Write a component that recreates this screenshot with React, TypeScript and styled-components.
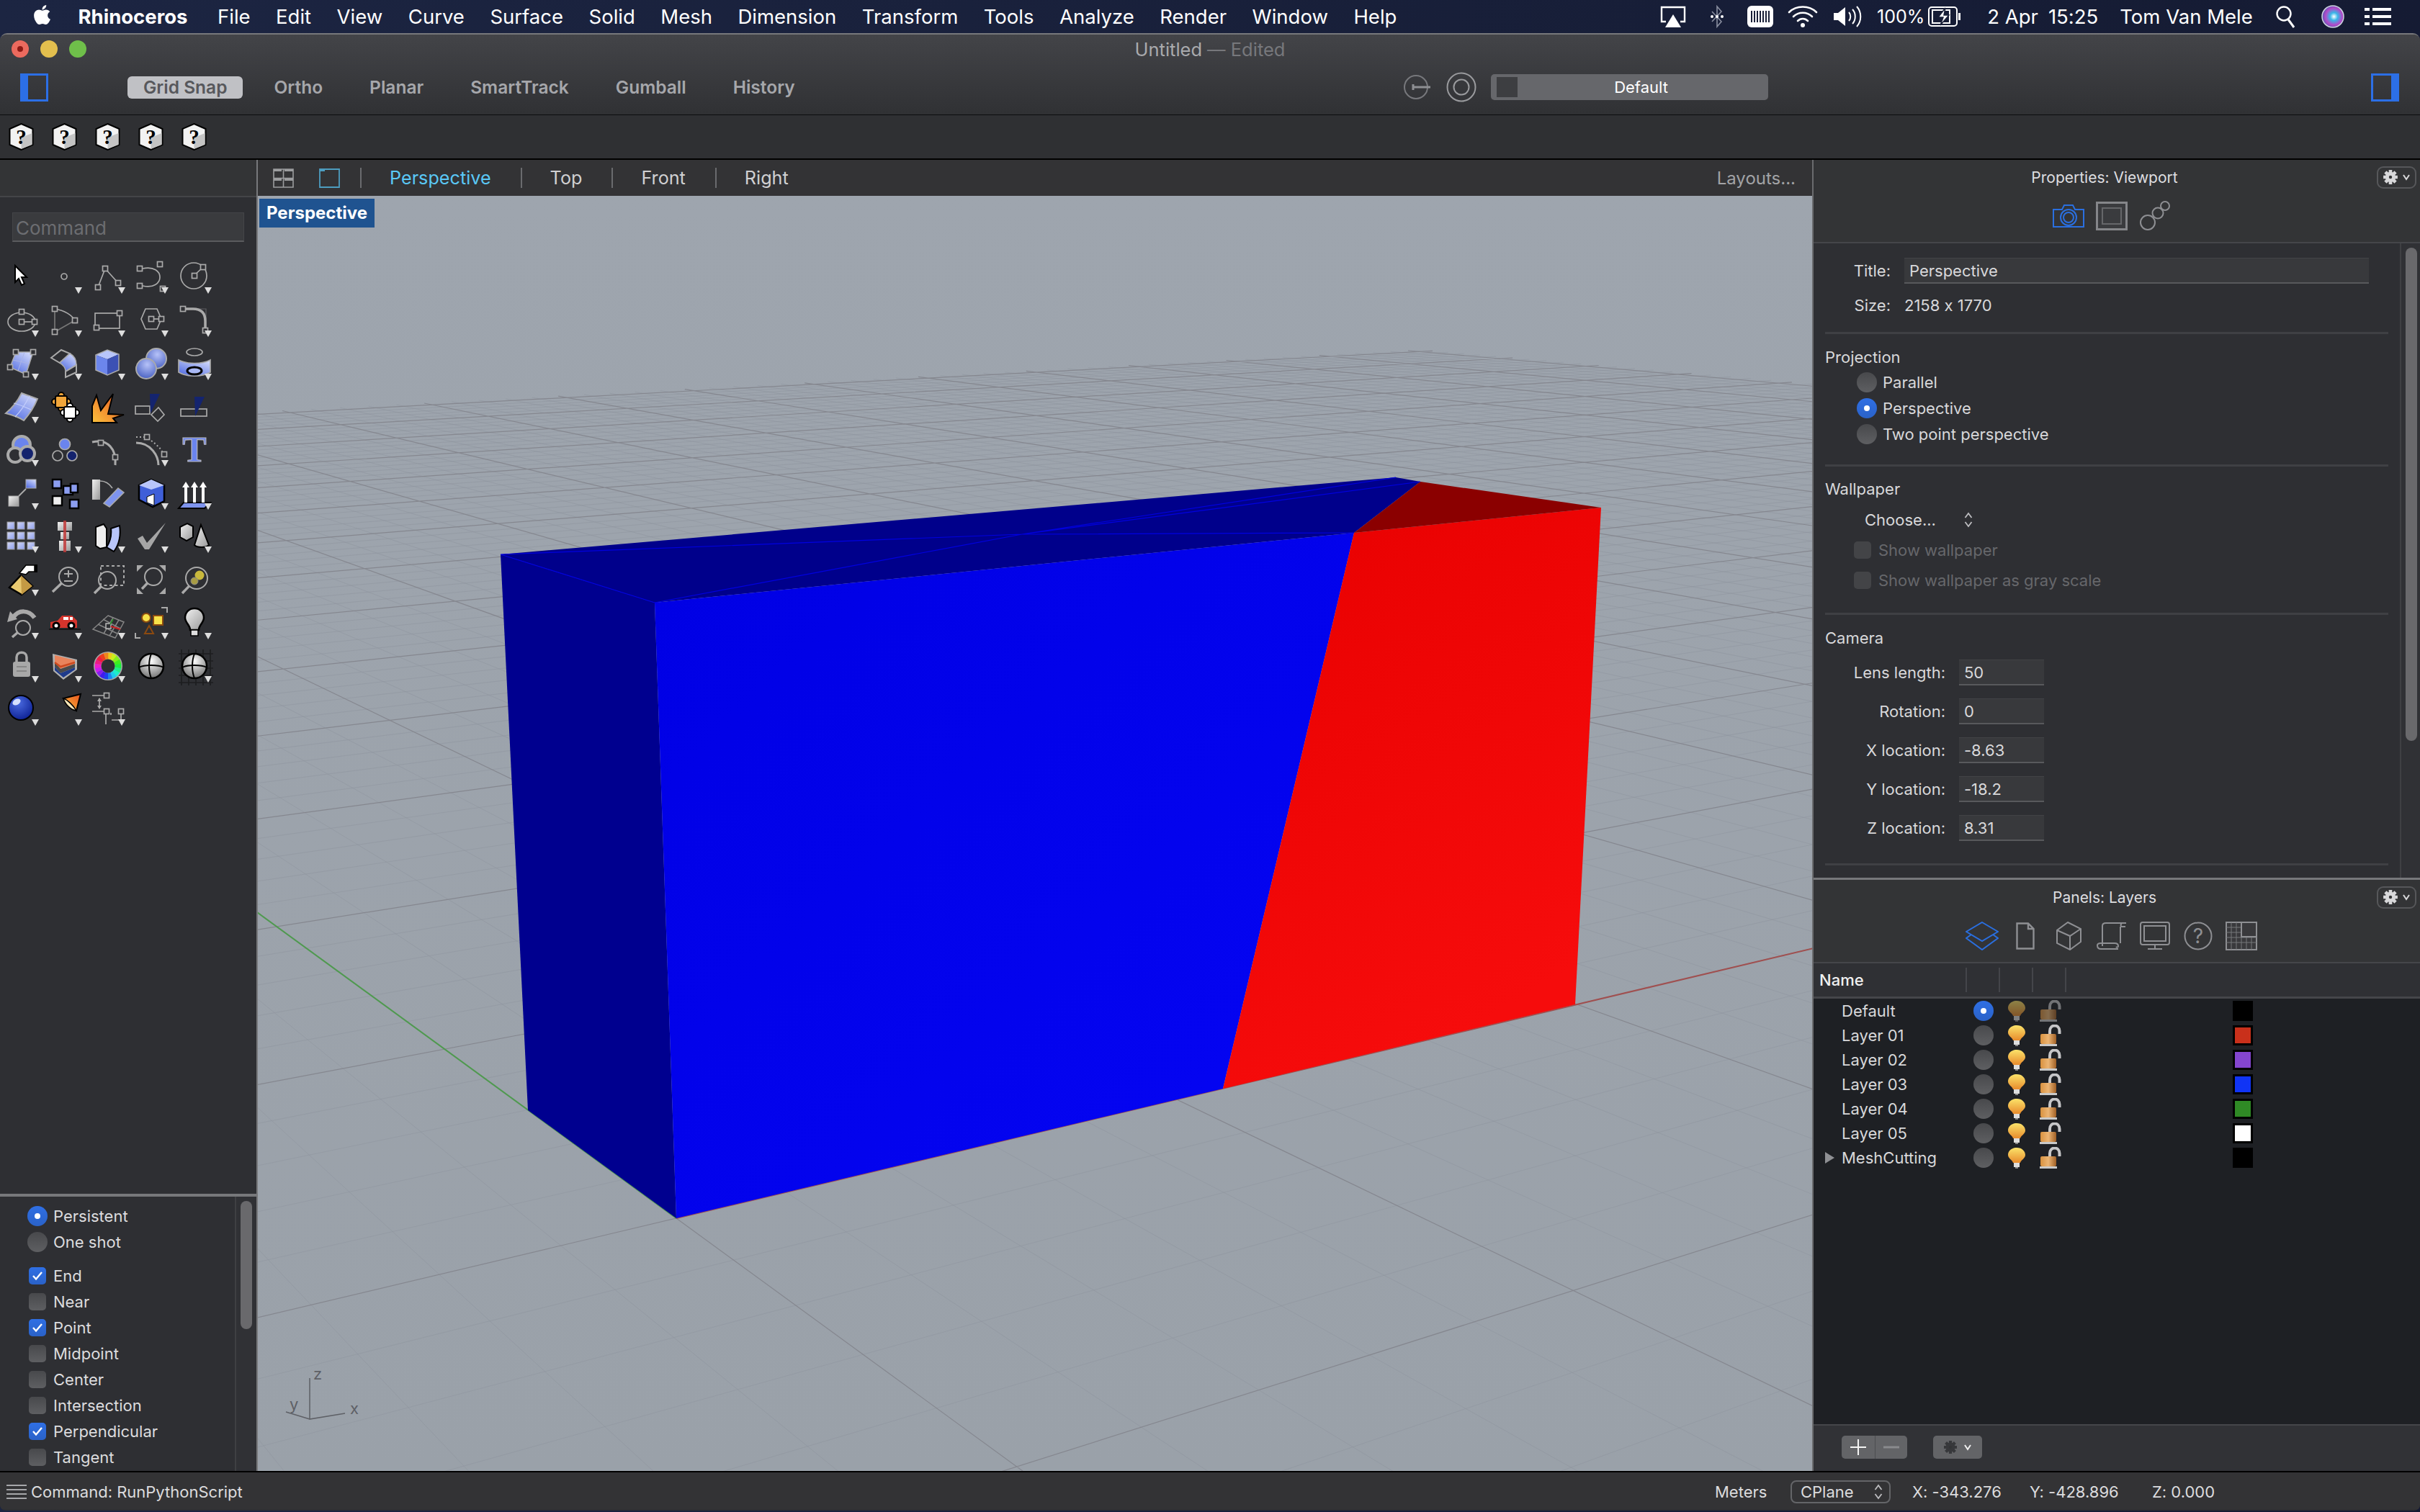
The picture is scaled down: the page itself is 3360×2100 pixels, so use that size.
import React from 'react';
import styled, { createGlobalStyle } from 'styled-components';
import { FaApple } from 'react-icons/fa';

const GlobalStyle = createGlobalStyle`
  html, body {
    margin: 0;
    padding: 0;
    width: 3360px;
    height: 2100px;
    overflow: hidden;
    background: #171d35;
    font-family: Inter, "Liberation Sans", sans-serif;
    font-feature-settings: "calt" 0;
  }
  * { box-sizing: border-box; }
`;

const Page = styled.div`
  width: 3360px;
  height: 2100px;
  display: flex;
  flex-direction: column;
  background: linear-gradient(90deg, #1c2542, #151b33);
`;

const MenuBar = styled.div`
  height: 46px;
  flex: none;
  display: flex;
  align-items: center;
  color: #fff;
  font-size: 27.5px;
  line-height: 46px;
`;

const MenuLeft = styled.div`
  width: 2305px;
  flex: none;
  display: flex;
  align-items: center;
  gap: 35.5px;
  padding-left: 43px;
  svg { margin-right: -1px; margin-top: -6px; }
`;

const MenuItem = styled.span<{ $bold?: boolean }>`
  font-weight: ${(p) => (p.$bold ? 700 : 400)};
  margin-right: ${(p) => (p.$bold ? 6 : 0)}px;
`;

const StatusIcon = styled.span<{ $gap?: number; $small?: boolean }>`
  display: flex;
  align-items: center;
  margin-left: ${(p) => p.$gap ?? 0}px;
  white-space: nowrap;
  ${(p) => (p.$small ? 'font-size: 25px;' : '')}
`;

const Win = styled.div`
  flex: 1;
  display: flex;
  flex-direction: column;
  border-top: 2px solid #77787b;
  border-radius: 10px 10px 8px 8px;
  margin-bottom: 2px;
  background: #2f3033;
  overflow: hidden;
`;

const TitleArea = styled.div`
  height: 112px;
  flex: none;
  border-bottom: 1px solid #0c0c0e;
  background: linear-gradient(180deg, #434448, #303134);
`;

const TitleRow = styled.div`
  height: 40px;
  display: flex;
  align-items: center;
  justify-content: center;
  position: relative;
  font-size: 25.5px;
  color: #a9aaad;
`;

const Dimmed = styled.span`
  color: #77787c;
  margin-left: 7px;
`;

const Lights = styled.div`
  position: absolute;
  left: 16px;
  top: 8px;
  display: flex;
  gap: 16px;
`;

const Light = styled.span<{ $color: string; $dot?: boolean }>`
  width: 24px;
  height: 24px;
  border-radius: 50%;
  background: ${(p) => p.$color};
  display: flex;
  align-items: center;
  justify-content: center;
  &::after {
    content: '';
    width: 8px;
    height: 8px;
    border-radius: 50%;
    background: ${(p) => (p.$dot ? '#8e1a14' : 'transparent')};
  }
`;

const ToolRow = styled.div`
  height: 66px;
  display: grid;
  grid-template-columns: 1920px 1fr auto;
  align-items: center;
  padding: 0 29px 0 28px;
`;

const ToolGroup = styled.div`
  display: flex;
  align-items: center;
  gap: 21px;
`;

const SideIcon = styled.span<{ $side: 'left' | 'right' }>`
  width: 39px;
  height: 39px;
  display: block;
  border: 3px solid #2c6fe6;
  border-${(p) => p.$side}-width: 11px;
  margin-right: 89px;
  ${(p) => (p.$side === 'right' ? 'margin-right: 0;' : '')}
`;

const ToggleBtn = styled.span<{ $on?: boolean }>`
  height: 31px;
  padding: 0 22px;
  border-radius: 6px;
  display: flex;
  align-items: center;
  font-size: 24.5px;
  font-weight: 600;
  color: ${(p) => (p.$on ? '#57585c' : '#a6a7ab')};
  background: ${(p) => (p.$on ? '#c0c1c5' : 'transparent')};
`;

const GizmoGroup = styled.div`
  display: flex;
  align-items: center;
  gap: 22px;
  svg:nth-child(2) { margin-left: -2px; margin-right: -2px; }
`;

const LayerCombo = styled.div`
  width: 385px;
  height: 36px;
  border-radius: 5px;
  background: #66676b;
  color: #fff;
  font-size: 22px;
  display: flex;
  align-items: center;
  position: relative;
  justify-content: center;
  padding-left: 32px;
  &::before {
    content: '';
    position: absolute;
    left: 8px;
    top: 4px;
    width: 29px;
    height: 28px;
    background: #3d3e41;
  }
`;

const IconBar = styled.div`
  height: 62px;
  flex: none;
  border-bottom: 2px solid #000;
  background: #2f3033;
  display: flex;
  align-items: center;
  gap: 25px;
  padding: 0 0 0 12px;
`;

const Workspace = styled.div`
  height: 1821px;
  flex: none;
  display: flex;
`;

const LeftCol = styled.div`
  width: 358px;
  flex: none;
  display: flex;
  flex-direction: column;
  border-right: 2px solid #77787b;
  background: #2e2f33;
`;

const LeftStrip = styled.div`
  height: 52px;
  flex: none;
  background: #333436;
  border-bottom: 2px solid #444548;
`;

const ToolPanel = styled.div`
  flex: 1;
  padding-top: 21px;
  border-bottom: 4px solid #77787b;
  min-height: 0;
`;

const CommandBox = styled.div`
  width: 322px;
  height: 41px;
  margin: 0 0 18px 17px;
  background: #3a3b3e;
  border: 1px solid #444548;
  border-bottom: 2px solid #5a5b5e;
  padding-left: 4px;
  font-size: 26px;
  line-height: 42px;
  color: #6c6d71;
`;

const ToolGrid = styled.div`
  display: grid;
  grid-template-columns: repeat(5, 60px);
  grid-auto-rows: 60px;
`;

const ToolSvg = styled.svg`
  width: 60px;
  height: 60px;
  display: block;
`;

const SnapPanel = styled.div`
  height: 381px;
  flex: none;
  display: flex;
  padding-top: 0;
`;

const SnapList = styled.div`
  flex: 1;
  padding: 9px 0 0 38px;
  font-size: 22px;
  color: #dcdcde;
`;

const Spaced = styled.div`
  height: 11px;
`;

const OptionRow = styled.div<{ $indent?: number; $muted?: boolean; $h?: number; $top?: number }>`
  height: ${(p) => p.$h ?? 36}px;
  margin-top: ${(p) => p.$top ?? 0}px;
  display: flex;
  align-items: center;
  padding-left: ${(p) => p.$indent ?? 0}px;
  color: ${(p) => (p.$muted ? '#66676b' : 'inherit')};
`;

const Radio = styled.span<{ $on?: boolean }>`
  width: 28px;
  height: 28px;
  flex: none;
  border-radius: 50%;
  margin-right: 8px;
  display: inline-flex;
  align-items: center;
  justify-content: center;
  background: ${(p) =>
    p.$on
      ? 'linear-gradient(180deg, #2f6fe4, #2a62c8)'
      : 'linear-gradient(180deg, #48494c, #5e5f62)'};
  &::after {
    content: '';
    width: 8px;
    height: 8px;
    border-radius: 50%;
    background: ${(p) => (p.$on ? '#fff' : 'transparent')};
  }
`;

const Check = styled.span<{ $on?: boolean; $muted?: boolean }>`
  width: 24px;
  height: 24px;
  flex: none;
  border-radius: 5px;
  margin: 0 10px 0 ${(p) => (p.$muted ? 0 : 2)}px;
  display: inline-flex;
  align-items: center;
  justify-content: center;
  background: ${(p) =>
    p.$on
      ? 'linear-gradient(180deg, #2f6fe4, #2a62c8)'
      : p.$muted
        ? '#434447'
        : 'linear-gradient(180deg, #48494c, #5e5f62)'};
`;

const ScrollTrack = styled.div`
  width: 30px;
  flex: none;
  border-left: 2px solid #3f4043;
  background: #303135;
  padding: 6px 0 0 6px;
`;

const ScrollThumb = styled.div<{ $h: number }>`
  width: 16px;
  height: ${(p) => p.$h}px;
  border-radius: 8px;
  background: #69696c;
`;

const Center = styled.div`
  flex: 1;
  display: flex;
  flex-direction: column;
  border-right: 2px solid #6a6b6e;
`;

const Tabs = styled.div`
  height: 50px;
  flex: none;
  background: #333335;
  display: flex;
  align-items: center;
  padding-left: 21px;
`;

const TabIcon = styled.svg`
  width: 29px;
  height: 27px;
  margin-right: 35px;
  &:nth-of-type(2) { margin-right: 28px; }
`;

const Tab = styled.span<{ $on?: boolean }>`
  height: 28px;
  line-height: 28px;
  padding: 0 41px 0 39px;
  border-left: 2px solid #6a6b6e;
  font-size: 25.2px;
  color: ${(p) => (p.$on ? '#5ac8f6' : '#d0d0d2')};
`;

const LayoutsBtn = styled.span`
  margin-left: auto;
  padding-right: 23px;
  font-size: 24px;
  color: #a2a3a6;
`;

const Viewport = styled.div`
  flex: 1;
  position: relative;
  background: linear-gradient(180deg, #9ea5ae, #9aa1a9);
  overflow: hidden;
  svg { display: block; }
`;

const ViewLabel = styled.div`
  position: absolute;
  left: 2px;
  top: 4px;
  width: 160px;
  height: 40px;
  background: #1f5390;
  color: #fff;
  font-size: 24px;
  font-weight: 700;
  line-height: 40px;
  text-align: center;
`;

const RightCol = styled.div`
  width: 844px;
  flex: none;
  display: flex;
  flex-direction: column;
  color: #d8d8da;
  font-size: 22px;
`;

const PropsPanel = styled.div`
  height: 1000px;
  flex: none;
  display: flex;
  flex-direction: column;
  border-bottom: 3px solid #77787b;
  background: #2e2f33;
`;

const PanelHead = styled.div`
  height: 116px;
  flex: none;
  background: #333436;
  border-bottom: 2px solid #45464a;
`;

const PanelTitleRow = styled.div`
  height: 48px;
  display: flex;
  align-items: center;
`;

const PanelTitle = styled.div`
  width: 808px;
  text-align: center;
  font-size: 21px;
  color: #dedee0;
`;

const GearBtn = styled.div`
  width: 55px;
  height: 31px;
  margin-left: -26px;
  border: 2px solid #56575a;
  border-radius: 9px;
  display: flex;
  align-items: center;
  justify-content: center;
  gap: 5px;
  color: #d8d8da;
`;

const PanelIcons = styled.div<{ $left: number }>`
  height: 60px;
  display: grid;
  grid-auto-flow: column;
  grid-auto-columns: 60px;
  justify-content: start;
  justify-items: center;
  align-items: center;
  padding-left: ${(p) => p.$left}px;
`;

const PropsBody = styled.div`
  flex: 1;
  display: flex;
  min-height: 0;
`;

const PropsScroll = styled.div`
  flex: 1;
  padding: 0 16px;
`;

const Section = styled.div<{ $h: number }>`
  height: ${(p) => p.$h}px;
  border-bottom: 3px solid #3f4044;
  display: flex;
  flex-direction: column;
`;

const SectionTitle = styled.div<{ $top: number; $after: number }>`
  height: 26px;
  line-height: 26px;
  margin-top: ${(p) => p.$top}px;
  margin-bottom: ${(p) => p.$after}px;
`;

const LabelRow = styled.div<{ $label: number; $h: number; $top?: number }>`
  display: grid;
  grid-template-columns: ${(p) => p.$label}px 1fr;
  column-gap: 19px;
  align-items: center;
  height: ${(p) => p.$h}px;
  margin-top: ${(p) => p.$top ?? 0}px;
`;

const RowLabel = styled.span`
  text-align: right;
`;

const Field = styled.div<{ $w: number }>`
  width: ${(p) => p.$w}px;
  height: 36px;
  line-height: 34px;
  padding-left: 7px;
  background: #38393c;
  border-top: 1px solid #424346;
  border-bottom: 2px solid #58595c;
`;

const ChooseRow = styled.div`
  height: 44px;
  display: flex;
  align-items: center;
  padding-left: 55px;
  gap: 38px;
`;

const LayersPanel = styled.div`
  flex: 1;
  display: flex;
  flex-direction: column;
  min-height: 0;
`;

const ColHead = styled.div`
  height: 49px;
  flex: none;
  display: flex;
  align-items: center;
  padding-left: 8px;
  background: #2f3034;
  border-bottom: 3px solid #45464a;
  font-size: 22px;
  font-weight: 500;
  color: #f0f0f0;
`;

const ColMarks = styled.div`
  display: flex;
  margin-left: 141px;
  span {
    width: 46px;
    height: 34px;
    border-left: 2px solid #44454a;
  }
`;

const LayerList = styled.div`
  flex: 1;
  background: #1e2024;
`;

const LayerRow = styled.div`
  height: 34px;
  display: grid;
  grid-template-columns: 39px 183px 46px 46px 46px 222px 28px;
  align-items: center;
  font-size: 22px;
  color: #d8d8da;
  svg { display: block; }
`;

const Arrow = styled.span`
  width: 0;
  height: 0;
  margin-left: 16px;
  border-left: 13px solid #8f9094;
  border-top: 8px solid transparent;
  border-bottom: 8px solid transparent;
`;

const Swatch = styled.span<{ $color: string }>`
  width: 28px;
  height: 28px;
  border: 3px solid #000;
  background: ${(p) => p.$color};
`;

const LayersFoot = styled.div`
  height: 65px;
  flex: none;
  background: #313236;
  border-top: 2px solid #45464a;
  padding: 14px 0 0 39px;
  display: flex;
  gap: 36px;
`;

const FootGroup = styled.div`
  height: 32px;
  width: 91px;
  border-radius: 5px;
  background: #636467;
  display: flex;
  align-items: center;
  color: #f0f0f0;
`;

const FootCell = styled.span<{ $w: number; $split?: boolean }>`
  width: ${(p) => p.$w}px;
  height: 32px;
  display: flex;
  align-items: center;
  justify-content: center;
  gap: 6px;
  ${(p) => (p.$split ? 'border-right: 1px solid #4c4d50;' : '')}
`;

const FootGear = styled(FootGroup)`
  width: 68px;
  justify-content: center;
  gap: 8px;
`;

const StatusBar = styled.div`
  height: 53px;
  flex: none;
  border-top: 2px solid #000;
  background: #333335;
  display: flex;
  align-items: center;
  padding-top: 2px;
  font-size: 22px;
  color: #dcdcde;
`;

const LinesIcon = styled.span`
  width: 28px;
  height: 20px;
  margin: 0 6px 0 9px;
  background: repeating-linear-gradient(180deg, #a6a7aa 0 2px, transparent 2px 6px);
`;

const StatusRight = styled.div`
  margin-left: auto;
  display: flex;
  align-items: center;
  width: 979px;
`;

const StatusText = styled.span<{ $w: number }>`
  width: ${(p) => p.$w}px;
  flex: none;
  white-space: nowrap;
`;

const PlaneSelect = styled.div`
  width: 139px;
  height: 32px;
  flex: none;
  margin-right: 30px;
  border: 2px solid #646568;
  border-radius: 8px;
  display: flex;
  align-items: center;
  justify-content: space-between;
  padding: 0 8px 0 12px;
`;

const DefsSvg = styled.svg`
  display: block;
  width: 0;
  height: 0;
`;

// ---- viewport drawing ----

const proj = (u: number, v: number) => {
  const a = 0.125;
  const b = 0.19;
  const w = 1 + a * u + b * v;
  return [(939 + a * u * 7192 + b * v * -1076) / w, (1692 + a * u * 207 + b * v * 221) / w];
};

const EXT = 14.15;

const gridPath = (step: number, skipMajor: boolean) => {
  let d = '';
  const n = Math.floor(EXT / step);
  for (let i = -n; i <= n; i++) {
    const k = i * step;
    if (skipMajor && i % 5 === 0) continue;
    const vMin = Math.max(-EXT, (0.04 - 1 - 0.125 * k) / 0.19);
    if (vMin < EXT) {
      const p = proj(k, vMin);
      const q = proj(k, EXT);
      d += `M${p[0].toFixed(1)} ${p[1].toFixed(1)}L${q[0].toFixed(1)} ${q[1].toFixed(1)}`;
    }
    const uMin = Math.max(-EXT, (0.04 - 1 - 0.19 * k) / 0.125);
    if (uMin < EXT) {
      const p = proj(uMin, k);
      const q = proj(EXT, k);
      d += `M${p[0].toFixed(1)} ${p[1].toFixed(1)}L${q[0].toFixed(1)} ${q[1].toFixed(1)}`;
    }
  }
  return d;
};

const minorGrid = gridPath(0.2, true);
const majorGrid = gridPath(1, false);
const xAxisEnd = proj(EXT, 0);
const yAxisEnd = proj(0, EXT);

const Scene = () => (
  <svg width="2158" height="1771" viewBox="358 272 2158 1771">
    <defs>
      <linearGradient id="frontBlue" x1="0" y1="0" x2="1" y2="1">
        <stop offset="0" stopColor="#0000e4" />
        <stop offset="1" stopColor="#0505f4" />
      </linearGradient>
      <linearGradient id="frontRed" x1="0" y1="0" x2="0.4" y2="1">
        <stop offset="0" stopColor="#e80000" />
        <stop offset="1" stopColor="#f60c0c" />
      </linearGradient>
    </defs>
    <path d={minorGrid} stroke="#8e949d" strokeOpacity="0.5" strokeWidth="1" fill="none" />
    <path d={majorGrid} stroke="#85878f" strokeWidth="1.2" fill="none" />
    <line x1="939" y1="1692" x2={xAxisEnd[0]} y2={xAxisEnd[1]} stroke="#a05050" strokeWidth="2" />
    <line x1="939" y1="1692" x2={yAxisEnd[0]} y2={yAxisEnd[1]} stroke="#4f9a4f" strokeWidth="2" />
    <polygon points="695,770 909,837 939,1692 733,1542" fill="#00008f" />
    <polygon points="695,770 1938,663 1972,669 1880,740 909,837" fill="#00008b" />
    <polygon points="909,837 1880,740 1698,1512 939,1692" fill="url(#frontBlue)" />
    <polygon points="1880,740 2223,705 2187,1395 1698,1512" fill="url(#frontRed)" />
    <polygon points="1880,740 1972,669 2223,705" fill="#8b0000" />
    <path d="M695 770L1419 742L1880 740M909 837L1419 742L1972 669M1419 742L1938 663M695 770L909 837" stroke="#0000e0" strokeWidth="1.2" fill="none" />
    <g stroke="#5e6066" strokeWidth="1.5" fill="none">
      <path d="M430 1914V1971L479 1963M430 1971L397 1961" />
    </g>
    <g fill="#5e6066" fontFamily="Inter, sans-serif" fontSize="22">
      <text x="435" y="1916">z</text>
      <text x="486" y="1964">x</text>
      <text x="402" y="1958">y</text>
    </g>
  </svg>
);

// ---- toolbar icons ----

const N = ({ x, y }: { x: number; y: number }) => (
  <rect x={x - 3.5} y={y - 3.5} width="7" height="7" fill="#2e2f33" stroke="#aaa" strokeWidth="1.7" />
);

const Mag = ({ x, y, r, hx, hy }: { x: number; y: number; r: number; hx: number; hy: number }) => {
  const dx = hx - x;
  const dy = hy - y;
  const l = Math.hypot(dx, dy);
  return (
    <>
      <circle cx={x} cy={y} r={r} fill="none" stroke="#aaa" strokeWidth="2" />
      <line x1={x + (dx / l) * r} y1={y + (dy / l) * r} x2={hx} y2={hy} stroke="#aaa" strokeWidth="3.5" />
    </>
  );
};

const L = ({ children }: { children: React.ReactNode }) => (
  <g fill="none" stroke="#aaa" strokeWidth="1.7">{children}</g>
);

const wheel = Array.from({ length: 18 }, (_, i) => {
  const a0 = (i * 20 * Math.PI) / 180;
  const a1 = ((i + 1) * 20 * Math.PI) / 180 + 0.02;
  const r = 14;
  return (
    <path
      key={i}
      d={`M${30 + r * Math.sin(a0)} ${31 - r * Math.cos(a0)}A${r} ${r} 0 0 1 ${30 + r * Math.sin(a1)} ${31 - r * Math.cos(a1)}`}
      stroke={`hsl(${(i * 20 + 50) % 360},85%,52%)`}
      strokeWidth="9"
      fill="none"
    />
  );
});

const Puzzle = ({ x, y, fill }: { x: number; y: number; fill: string }) => (
  <g fill={fill} stroke="#000" strokeWidth="2" transform={`translate(${x} ${y})`}>
    <circle cx="8" cy="0" r="4" />
    <circle cx="-1" cy="9" r="4" />
    <circle cx="17" cy="9" r="4" />
    <circle cx="8" cy="18" r="4" />
    <rect x="0" y="1" width="16" height="16" rx="2" />
    <path d="M3 5h10v8H3z" stroke="none" />
  </g>
);

const TOOLS: [boolean, React.ReactNode][] = [
  // row 0
  [false, <path d="M21 15V38L26 33L30 42L34 40L30 31L37 31Z" fill="#fff" stroke="#000" strokeWidth="2" />],
  [true, <L><circle cx="29" cy="30" r="4" /></L>],
  [true, <><L><path d="M16 45L26 19L44 39" /></L><N x={16} y={45} /><N x={26} y={19} /><N x={44} y={39} /></>],
  [true, <><L><path d="M18 19C50 12 50 50 18 43" /></L><N x={14} y={19} /><N x={14} y={43} /><N x={42} y={13} /><N x={46} y={47} /></>],
  [true, <><L><circle cx="29" cy="29" r="18" /><path d="M29 29L42 17" /></L><N x={30} y={29} /><N x={42} y={17} /></>],
  // row 1
  [true, <><L><ellipse cx="30" cy="33" rx="19" ry="13" /><path d="M30 33H48" /></L><N x={30} y={19} /><N x={30} y={33} /><N x={48} y={33} /></>],
  [true, <><L><path d="M16 15V47L44 31" stroke="#777" /><path d="M16 15C30 17 40 24 44 31" /></L><N x={16} y={15} /><N x={44} y={31} /><N x={16} y={47} /></>],
  [true, <><L><rect x="12" y="21" width="34" height="21" /></L><N x={14} y={41} /><N x={46} y={21} /></>],
  [true, <><L><path d="M16 29L22 15H38L44 29L38 43H22Z" /><path d="M30 29H44" /></L><N x={30} y={29} /><N x={44} y={29} /></>],
  [true, <><path d="M17 15H46V44" fill="none" stroke="#5e5f62" strokeWidth="1.2" /><path d="M17 15H28Q45 15 45 32V42" fill="none" stroke="#aaa" strokeWidth="3.5" /><N x={14} y={15} /><N x={45} y={45} /></>],
  // row 2
  [true, <><path d="M22 15H46L36 46L14 36Z" fill="url(#toolBlue)" stroke="#aaa" strokeWidth="1.5" /><path d="M34 15L25 41M18 26L41 31" stroke="#aab4e6" strokeWidth="1" /><N x={22} y={15} /><N x={46} y={15} /><N x={14} y={36} /><N x={36} y={46} /></>],
  [true, <><path d="M11 23L25 12L37 17L23 30Z" fill="none" stroke="#aaa" strokeWidth="2" /><path d="M23 30L37 17C43 20 46 26 46 33L31 42C31 37 28 33 23 30Z" fill="url(#toolBlue)" stroke="#aaa" strokeWidth="1.5" /><path d="M31 42L46 33V43L31 50Z" fill="none" stroke="#aaa" strokeWidth="2" /></>],
  [true, <><path d="M13 19L29 12L45 18L29 25Z" fill="#b8c5fa" /><path d="M13 19L29 25V47L13 40Z" fill="#6c86ec" /><path d="M29 25L45 18V40L29 47Z" fill="#3c51b4" /><path d="M13 19L29 12L45 18V40L29 47L13 40Z" fill="none" stroke="#aaa" strokeWidth="1.5" /></>],
  [true, <><circle cx="37" cy="24" r="14" fill="url(#toolSphere)" stroke="#aaa" strokeWidth="2" /><circle cx="23" cy="38" r="14" fill="url(#toolSphere)" stroke="#aaa" strokeWidth="2" /></>],
  [true, <><ellipse cx="30" cy="15" rx="11" ry="5" fill="none" stroke="#aaa" strokeWidth="1.7" /><path d="M8 26C20 32 40 32 52 26V43C40 50 20 50 8 43Z" fill="url(#toolBlue)" stroke="#aaa" strokeWidth="1.7" /><ellipse cx="30" cy="41" rx="10" ry="5" fill="#a9b8f5" stroke="#000" strokeWidth="3" /></>],
  // row 3
  [true, <><path d="M30 12L52 20C48 30 42 40 33 50C24 44 16 42 8 40C18 32 24 24 30 12Z" fill="url(#toolBlue)" stroke="#aaa" strokeWidth="2" /><path d="M41 16C36 26 30 36 21 45M19 26C28 28 36 32 43 35" stroke="#c4cefa" fill="none" strokeWidth="1.2" /></>],
  [false, <><Puzzle x={17} y={15} fill="#f2a63a" /><Puzzle x={29} y={30} fill="#fff" /></>],
  [false, <path d="M8 53V30L14 15L20 36L37 13L30 41L52 42L37 47L42 53Z" fill="url(#toolOrange)" stroke="#000" strokeWidth="2" />],
  [false, <><L><rect x="8" y="30" width="20" height="11" /><path d="M40 32L48 42L39 51L30 42Z" /></L><path d="M28 13H42L29 40Z" fill="#14246f" /></>],
  [false, <><L><rect x="11" y="34" width="36" height="10" /></L><path d="M30 17H44L31 44Z" fill="#14246f" /></>],
  // row 4
  [true, <><circle cx="30" cy="24" r="12" fill="#6a84ee" stroke="#aaa" strokeWidth="4" /><circle cx="21" cy="38" r="10" fill="#2e2f33" stroke="#aaa" strokeWidth="4" /><circle cx="38" cy="36" r="10" fill="#14236e" stroke="#aaa" strokeWidth="4" /></>],
  [false, <><circle cx="30" cy="23" r="7.5" fill="#6a84ee" stroke="#aaa" strokeWidth="1.7" /><circle cx="20" cy="39" r="7" fill="none" stroke="#aaa" strokeWidth="1.7" /><circle cx="40" cy="39" r="7" fill="#14236e" stroke="#aaa" strokeWidth="1.7" /></>],
  [false, <><path d="M8 20C30 15 42 30 40 52" fill="none" stroke="#aaa" strokeWidth="3" /><N x={20} y={21} /><N x={40} y={41} /></>],
  [true, <><path d="M9 21C30 21 40 40 40 52" fill="none" stroke="#aaa" strokeWidth="3" /><path d="M9 13H20M30 18C38 24 44 30 45 33" fill="none" stroke="#aaa" strokeWidth="2" strokeDasharray="2 3" /><N x={24} y={13} /><N x={48} y={37} /></>],
  [false, <text x="30" y="47" textAnchor="middle" fontFamily="Liberation Serif, serif" fontWeight="700" fontSize="50" fill="#6a84ee" stroke="#b8b8c0" strokeWidth="1.2">T</text>],
  // row 5
  [true, <><rect x="36" y="12" width="14" height="12" fill="url(#toolBlue)" stroke="#aaa" /><path d="M26 35L36 25" stroke="#aaa" strokeWidth="2" /><rect x="12" y="35" width="14" height="14" fill="url(#toolGray)" stroke="#aaa" /></>],
  [false, <><g stroke="#000" strokeWidth="2.5"><rect x="13" y="12" width="12" height="12" fill="#8b9df0" /><rect x="28" y="21" width="13" height="12" fill="#8b9df0" /><rect x="38" y="18" width="10" height="12" fill="#8b9df0" /><rect x="13" y="35" width="13" height="13" fill="#eee" /><rect x="37" y="40" width="12" height="12" fill="#8b9df0" /></g></>],
  [false, <><rect x="8" y="12" width="11" height="28" fill="url(#toolGray)" /><path d="M19 14C26 14 32 18 36 24" fill="none" stroke="#aaa" strokeWidth="1.7" /><path d="M24 45L44 24L52 30L32 50Z" fill="#7e94ee" stroke="#aaa" strokeWidth="1.5" /></>],
  [true, <><path d="M13 20L30 12L48 20V42L32 50L13 40Z" fill="#3f5fd8" stroke="#000" strokeWidth="2.5" /><path d="M13 20L30 26L48 20L30 12Z" fill="#b8c5fa" /><path d="M24 36L34 32V48L24 44Z" fill="#fff" stroke="#000" strokeWidth="1" /></>],
  [true, <><path d="M15 44H52L44 52H8Z" fill="#7e94ee" stroke="#000" strokeWidth="2" /><path d="M18 44V22M30 44V22M42 44V22" stroke="#fff" strokeWidth="4" /><path d="M13 23L18 15L23 23ZM25 23L30 15L35 23ZM37 23L42 15L47 23Z" fill="#fff" /></>],
  // row 6
  [true, <g fill="url(#toolGrid)" stroke="#9a9a9a">{[11, 25, 39].map((y) => [10, 24, 38].map((x) => <rect key={`${x}-${y}`} x={x} y={y} width="10" height="10" />))}</g>],
  [true, <><rect x="20" y="11" width="20" height="12" fill="url(#toolGray)" /><rect x="24" y="25" width="12" height="10" fill="url(#toolGray)" /><rect x="22" y="37" width="16" height="14" fill="url(#toolGray)" /><rect x="28" y="9" width="4" height="44" fill="#c0393a" fillOpacity="0.85" /></>],
  [true, <><path d="M13 18L24 14L28 20V46L19 48L13 44Z" fill="#eee" stroke="#000" strokeWidth="2" /><path d="M34 20L46 16C48 28 46 42 38 52L28 46C33 38 35 28 34 20Z" fill="#b8c5fa" stroke="#000" strokeWidth="2" /></>],
  [true, <path d="M11 34L18 30L24 40L50 12L27 49H21Z" fill="#a6a6a6" />],
  [true, <><path d="M10 18L20 13L28 17V32L19 37L10 32Z" fill="url(#toolGray)" stroke="#000" strokeWidth="2" /><path d="M39 15L50 43C46 47 34 47 30 43Z" fill="url(#toolGray)" stroke="#000" strokeWidth="2" /></>],
  // row 7
  [true, <><path d="M29 25L13 42L30 52L45 40Z" fill="#e8c970" stroke="#000" strokeWidth="2.5" /><path d="M29 25L30 52L45 40Z" fill="#c49a44" /><path d="M27 22L36 11H48V20H40L36 24Z" fill="#fff" stroke="#000" strokeWidth="1.5" /><rect x="48" y="10" width="4" height="11" fill="#000" /></>],
  [false, <><Mag x={35} y={27} r={13} hx={13} hy={48} /><path d="M29 23H41M35 18V28M29 33H41" stroke="#aaa" strokeWidth="2" /></>],
  [false, <><Mag x={29} y={32} r={12} hx={11} hy={50} /><rect x="20" y="12" width="32" height="27" fill="none" stroke="#aaa" strokeWidth="2" strokeDasharray="4 3.5" /></>],
  [false, <><Mag x={33} y={27} r={12} hx={17} hy={44} /><path d="M10 11H19L10 20ZM50 11H41L50 20ZM10 51V42L19 51ZM50 51V42L41 51Z" fill="#a9a9a9" /></>],
  [false, <><circle cx="37" cy="25" r="6.5" fill="#c8b83c" /><circle cx="30" cy="33" r="5" fill="#a89c44" stroke="#8a8a8a" /><Mag x={33} y={29} r={15} hx={13} hy={50} /></>],
  // row 8
  [true, <><path d="M48 24C40 13 26 12 18 24" fill="none" stroke="#a9a9a9" strokeWidth="6" /><path d="M10 30L14 15L24 26Z" fill="#a9a9a9" /><Mag x={32} y={38} r={10} hx={17} hy={51} /></>],
  [true, <><path d="M10 38V30L20 28L26 21H40L47 28V38Z" fill="#d4342c" /><path d="M28 23H35V27H28ZM37 23H41V27H37Z" fill="#fff" /><circle cx="18" cy="35" r="4" fill="#fff" stroke="#000" strokeWidth="3" /><circle cx="39" cy="35" r="4" fill="#fff" stroke="#000" strokeWidth="3" /><path d="M8 40H52" stroke="#111" strokeWidth="1.5" /></>],
  [true, <><path d="M30 21L52 30L40 52L9 40ZM23 26L47 39M16 33L43 46M37 24L24 46M45 27L32 49" fill="none" stroke="#858585" strokeWidth="1.5" /><rect x="27" y="32" width="7" height="7" fill="#2e2f33" stroke="#bbb" strokeWidth="1.5" /><path d="M33 33L37 26" stroke="#2f8a2f" strokeWidth="2" /><path d="M34 36L47 40" stroke="#c22" strokeWidth="2" /></>],
  [true, <><circle cx="23" cy="24" r="6" fill="#f7e24a" stroke="#8b4a10" strokeWidth="2" /><rect x="33" y="21" width="13" height="13" fill="#f7e24a" stroke="#8b4a10" strokeWidth="2" /><path d="M27 35L33 46H21Z" fill="none" stroke="#8b4a10" strokeWidth="2" /><path d="M44 10H52V17M8 45V52H15" fill="none" stroke="#aaa" strokeWidth="2" /></>],
  [true, <><path d="M30 11C22 11 17 17 17 24C17 31 24 34 24 41H36C36 34 43 31 43 24C43 17 38 11 30 11Z" fill="url(#toolGray)" stroke="#000" strokeWidth="2.5" /><rect x="25" y="41" width="10" height="8" fill="#ddd" stroke="#000" strokeWidth="1.5" /></>],
  // row 9
  [true, <><path d="M23 26V19C23 10 37 10 37 19V26" fill="none" stroke="#a8a8a8" strokeWidth="3.5" /><rect x="18" y="25" width="24" height="21" rx="3" fill="#a8a8a8" /><path d="M23 32H37M23 38H37" stroke="#7c7c7c" strokeWidth="1.5" /></>],
  [true, <><path d="M13 14L47 22V36L28 50L14 38Z" fill="#b0b0b0" /><path d="M16 16L44 23V28L24 35L16 26Z" fill="#e8845c" /><path d="M16 26L24 35L44 28V33L24 41L16 32Z" fill="#4a4a4a" /><path d="M16 32L24 41L44 33V36L28 47L16 37Z" fill="#1e3a8a" /><path d="M16 26L24 32L44 26" stroke="#cc4a20" strokeWidth="2.5" fill="none" /></>],
  [true, <><circle cx="30" cy="31" r="20" fill="#a8a8a8" />{wheel}<circle cx="30" cy="31" r="9.5" fill="#2e2f33" /></>],
  [false, <><circle cx="30" cy="31" r="17" fill="url(#toolWhite)" stroke="#000" strokeWidth="2.5" /><path d="M13 33C20 29 40 29 47 33M30 14C26 24 26 38 30 48" fill="none" stroke="#000" strokeWidth="2" /></>],
  [true, <><path d="M8 14H56M8 24H56M8 34H56M8 44H56M8 54H56M12 8V58M22 8V58M32 8V58M42 8V58M52 8V58" stroke="#111" strokeOpacity="0.55" strokeWidth="1.7" /><circle cx="30" cy="31" r="17" fill="url(#toolWhite)" stroke="#000" strokeWidth="2.5" /><path d="M13 33C20 29 40 29 47 33M30 14C26 24 26 38 30 48" fill="none" stroke="#000" strokeWidth="2" /></>],
  // row 10
  [true, <><circle cx="29" cy="29" r="17" fill="url(#toolDeep)" stroke="#000" strokeWidth="2" /><ellipse cx="23" cy="21" rx="6" ry="4" fill="#d5e0ff" transform="rotate(-30 23 21)" /></>],
  [true, <><path d="M28 16L52 10L46 33Z" fill="url(#toolOrange)" stroke="#000" strokeWidth="2" /><path d="M28 16C34 18 42 26 46 33C38 32 30 24 28 16Z" fill="#f5e6b8" stroke="#000" strokeWidth="1.5" /></>],
  [true, <><L><path d="M8 12H25M8 34H25M27 36V52M34 39V36M26 32V34M18 16V30M35 46H46" /></L><path d="M15 20L18 15L21 20ZM15 26L18 31L21 26Z" fill="#aaa" /><N x={28} y={12} /><N x={28} y={34} /><N x={48} y={34} /><path d="M48 37V48" stroke="#aaa" strokeWidth="1.7" /></>],
];

const Tool = ({ menu, children }: { menu: boolean; children: React.ReactNode }) => (
  <ToolSvg viewBox="0 0 60 60">
    {children}
    {menu && <path d="M44 45H54L49 54Z" fill="#dedede" />}
  </ToolSvg>
);

const Defs = () => (
  <DefsSvg>
    <defs>
      <linearGradient id="toolBlue" x1="0.8" y1="0" x2="0.1" y2="1">
        <stop offset="0" stopColor="#d0d8fb" />
        <stop offset="1" stopColor="#4d68e0" />
      </linearGradient>
      <radialGradient id="toolSphere" cx="0.55" cy="0.3" r="0.8">
        <stop offset="0" stopColor="#b6c2f8" />
        <stop offset="1" stopColor="#3d56bc" />
      </radialGradient>
      <linearGradient id="toolOrange" x1="0" y1="1" x2="1" y2="0">
        <stop offset="0" stopColor="#fbc23d" />
        <stop offset="1" stopColor="#e8501e" />
      </linearGradient>
      <linearGradient id="toolGray" x1="0" y1="0" x2="1" y2="1">
        <stop offset="0" stopColor="#f2f2f2" />
        <stop offset="1" stopColor="#989898" />
      </linearGradient>
      <linearGradient id="toolGrid" x1="0" y1="0" x2="1" y2="1" gradientUnits="objectBoundingBox">
        <stop offset="0" stopColor="#d2d6f2" />
        <stop offset="1" stopColor="#8fa0ee" />
      </linearGradient>
      <radialGradient id="toolWhite" cx="0.5" cy="0.3" r="0.72">
        <stop offset="0" stopColor="#fff" />
        <stop offset="1" stopColor="#707070" />
      </radialGradient>
      <radialGradient id="toolDeep" cx="0.4" cy="0.3" r="0.8">
        <stop offset="0" stopColor="#4a6ae0" />
        <stop offset="1" stopColor="#071a8c" />
      </radialGradient>
      <linearGradient id="bulbOn" x1="0" y1="0" x2="0" y2="1">
        <stop offset="0" stopColor="#fbe36a" />
        <stop offset="1" stopColor="#e88b2c" />
      </linearGradient>
      <linearGradient id="lockBody" x1="0" y1="0" x2="1" y2="0">
        <stop offset="0" stopColor="#d8913f" />
        <stop offset="0.5" stopColor="#ecb574" />
        <stop offset="1" stopColor="#a05f25" />
      </linearGradient>
    </defs>
  </DefsSvg>
);

const QuestionBlock = () => (
  <svg width="35" height="38" viewBox="0 0 34 38">
    <path d="M17 1L33 8V30L17 37L1 30V8Z" fill="#f2f2f2" stroke="#000" strokeWidth="2" />
    <path d="M17 36V20L32 14V30Z" fill="#c4c4c4" />
    <text x="17" y="29" textAnchor="middle" fontFamily="Liberation Serif, serif" fontWeight="700" fontSize="29" fill="#000">?</text>
  </svg>
);

const Gear = ({ size = 22, color = '#d8d8da' }: { size?: number; color?: string }) => (
  <svg width={size} height={size} viewBox="0 0 20 20">
    <g stroke={color} strokeWidth="4.2">
      <path d="M10 1V19M1 10H19M3.6 3.6L16.4 16.4M16.4 3.6L3.6 16.4" />
    </g>
    <circle cx="10" cy="10" r="6.5" fill={color} />
    <circle cx="10" cy="10" r="2" fill="#333436" />
  </svg>
);

const Chevron = () => (
  <svg width="12" height="10" viewBox="0 0 12 10">
    <path d="M2 2L6 8L10 2" fill="none" stroke="currentColor" strokeWidth="2" />
  </svg>
);

const UpDown = () => (
  <svg width="14" height="24" viewBox="0 0 14 24">
    <path d="M2.5 9L7 3L11.5 9M2.5 15L7 21L11.5 15" fill="none" stroke="#bdbdc0" strokeWidth="1.8" />
  </svg>
);

const Bulb = ({ dim }: { dim?: boolean }) => (
  <svg width="28" height="30" viewBox="0 0 28 30" opacity={dim ? 0.5 : 1}>
    <path d="M14 1C6.5 1 2 6 2 11C2 16 8 18 9 22H19C20 18 26 16 26 11C26 6 21.5 1 14 1Z" fill="url(#bulbOn)" />
    <rect x="10" y="22" width="8" height="6" fill="#ddd" />
    <rect x="12" y="28" width="4" height="2" fill="#888" />
  </svg>
);

const Lock = ({ dim }: { dim?: boolean }) => (
  <svg width="30" height="30" viewBox="0 0 30 30" opacity={dim ? 0.5 : 1}>
    <path d="M14 14V9C14 -1 27.5 -1 27.5 9V13" fill="none" stroke="#c6c6c8" strokeWidth="4" />
    <rect x="1" y="13" width="22" height="14" rx="2" fill="url(#lockBody)" />
    <rect x="0" y="27" width="24" height="3" fill="#c9c9c9" />
  </svg>
);

const LAYERS: { name: string; color: string; active?: boolean; children?: boolean }[] = [
  { name: 'Default', color: '#000', active: true },
  { name: 'Layer 01', color: '#c9301b' },
  { name: 'Layer 02', color: '#8445cf' },
  { name: 'Layer 03', color: '#1034f5' },
  { name: 'Layer 04', color: '#2f8a25' },
  { name: 'Layer 05', color: '#fff' },
  { name: 'MeshCutting', color: '#000', children: true },
];

const SNAPS: [string, boolean][] = [
  ['End', true],
  ['Near', false],
  ['Point', true],
  ['Midpoint', false],
  ['Center', false],
  ['Intersection', false],
  ['Perpendicular', true],
  ['Tangent', false],
];

const CAMERA: [string, string][] = [
  ['Lens length:', '50'],
  ['Rotation:', '0'],
  ['X location:', '-8.63'],
  ['Y location:', '-18.2'],
  ['Z location:', '8.31'],
];

const MENUS = ['File', 'Edit', 'View', 'Curve', 'Surface', 'Solid', 'Mesh', 'Dimension', 'Transform', 'Tools', 'Analyze', 'Render', 'Window', 'Help'];

const CheckMark = () => (
  <svg width="16" height="14" viewBox="0 0 16 14">
    <path d="M2 7L6 11.5L14 2" fill="none" stroke="#fff" strokeWidth="2.4" />
  </svg>
);

const App: React.FC = () => {
  return (
    <Page>
      <GlobalStyle />
      <Defs />
      <MenuBar>
        <MenuLeft>
          <FaApple size={31} />
          <MenuItem $bold>Rhinoceros</MenuItem>
          {MENUS.map((m) => (
            <MenuItem key={m}>{m}</MenuItem>
          ))}
        </MenuLeft>
        <StatusIcon>
          <svg width="36" height="36" viewBox="0 0 36 36">
            <path d="M8 25H2V5H34V25H28" fill="none" stroke="#fff" strokeWidth="2.4" />
            <path d="M18 15L29 33H7Z" fill="#fff" />
          </svg>
        </StatusIcon>
        <StatusIcon $gap={32}>
          <svg width="22" height="34" viewBox="0 0 22 34">
            <path d="M4 10L17 24L11 31V3L17 10L4 24" fill="none" stroke="#8a8fa0" strokeWidth="1.6" />
            <circle cx="4" cy="17" r="2" fill="#fff" />
            <circle cx="11" cy="17" r="2" fill="#fff" />
            <circle cx="18" cy="17" r="2" fill="#fff" />
          </svg>
        </StatusIcon>
        <StatusIcon $gap={31}>
          <svg width="36" height="32" viewBox="0 0 36 32">
            <rect x="0" y="1" width="36" height="30" rx="6" fill="#fff" />
            <path d="M6 8V24M10 8V24M14 8V24M18 8V24M22 8V24M26 8V24M30 8V24" stroke="#1a2038" strokeWidth="2" />
          </svg>
        </StatusIcon>
        <StatusIcon $gap={20}>
          <svg width="42" height="34" viewBox="0 0 42 34">
            <g fill="none" stroke="#fff" strokeWidth="2.6" strokeLinecap="round">
              <path d="M2 11C12 1 30 1 40 11" />
              <path d="M8 17C15 10 27 10 34 17" />
              <path d="M14 23C18 19 24 19 28 23" />
            </g>
            <circle cx="21" cy="29" r="3" fill="#fff" />
          </svg>
        </StatusIcon>
        <StatusIcon $gap={21}>
          <svg width="42" height="34" viewBox="0 0 42 34">
            <path d="M1 12H7L17 4V30L7 22H1Z" fill="#fff" />
            <g fill="none" stroke="#fff" strokeWidth="2">
              <path d="M22 11C25 14 25 20 22 23" />
              <path d="M27 7C32 12 32 22 27 27" />
              <path d="M33 3C40 11 40 23 33 31" />
            </g>
          </svg>
        </StatusIcon>
        <StatusIcon $gap={19} $small>100%</StatusIcon>
        <StatusIcon $gap={5}>
          <svg width="46" height="30" viewBox="0 0 46 30">
            <rect x="1" y="2" width="39" height="26" rx="4" fill="none" stroke="#fff" strokeWidth="2" />
            <path d="M42 10H45V20H42Z" fill="#fff" />
            <path d="M6 6H30V24H6Z" fill="none" stroke="#fff" strokeWidth="2" />
            <path d="M24 3L14 16H21L17 27L29 13H22Z" fill="#fff" stroke="#1a2038" strokeWidth="1.5" />
          </svg>
        </StatusIcon>
        <StatusIcon $gap={36}>2 Apr</StatusIcon>
        <StatusIcon $gap={14}>15:25</StatusIcon>
        <StatusIcon $gap={30}>Tom Van Mele</StatusIcon>
        <StatusIcon $gap={31}>
          <svg width="28" height="34" viewBox="0 0 28 34">
            <circle cx="12" cy="13" r="9.5" fill="none" stroke="#fff" strokeWidth="2.4" />
            <path d="M18 21L26 32" stroke="#fff" strokeWidth="3" />
          </svg>
        </StatusIcon>
        <StatusIcon $gap={36}>
          <svg width="32" height="32" viewBox="0 0 32 32">
            <defs>
              <radialGradient id="siri" cx="0.55" cy="0.5" r="0.6">
                <stop offset="0" stopColor="#fff" />
                <stop offset="0.3" stopColor="#38b6e8" />
                <stop offset="0.65" stopColor="#b44ac8" />
                <stop offset="1" stopColor="#3a5ab0" />
              </radialGradient>
            </defs>
            <circle cx="16" cy="16" r="15" fill="url(#siri)" stroke="#cfd4e0" strokeWidth="1.5" />
          </svg>
        </StatusIcon>
        <StatusIcon $gap={28}>
          <svg width="37" height="28" viewBox="0 0 37 28">
            <path d="M0 2H7V6H0ZM11 2H37V6H11ZM0 12H7V16H0ZM11 12H37V16H11ZM0 22H7V26H0ZM11 22H37V26H11Z" fill="#fff" />
          </svg>
        </StatusIcon>
      </MenuBar>

      <Win>
        <TitleArea>
          <TitleRow>
            <Lights>
              <Light $color="#ec6a5e" $dot />
              <Light $color="#e3bf4e" />
              <Light $color="#6fbf4a" />
            </Lights>
            Untitled
            <Dimmed>— Edited</Dimmed>
          </TitleRow>
          <ToolRow>
            <ToolGroup>
              <SideIcon $side="left" />
              <ToggleBtn $on>Grid Snap</ToggleBtn>
              <ToggleBtn>Ortho</ToggleBtn>
              <ToggleBtn>Planar</ToggleBtn>
              <ToggleBtn>SmartTrack</ToggleBtn>
              <ToggleBtn>Gumball</ToggleBtn>
              <ToggleBtn>History</ToggleBtn>
            </ToolGroup>
            <GizmoGroup>
              <svg width="40" height="36" viewBox="0 0 40 36">
                <circle cx="18" cy="18" r="16" fill="none" stroke="#77787c" strokeWidth="2" />
                <path d="M14 14V22M14 18H38" stroke="#8e8f93" strokeWidth="3" />
              </svg>
              <svg width="42" height="42" viewBox="0 0 42 42">
                <circle cx="21" cy="21" r="19.5" fill="none" stroke="#9a9b9e" strokeWidth="2" />
                <circle cx="21" cy="21" r="10.5" fill="none" stroke="#9a9b9e" strokeWidth="2" />
              </svg>
              <LayerCombo>Default</LayerCombo>
            </GizmoGroup>
            <SideIcon $side="right" />
          </ToolRow>
        </TitleArea>

        <IconBar>
          {[0, 1, 2, 3, 4].map((i) => (
            <QuestionBlock key={i} />
          ))}
        </IconBar>

        <Workspace>
          <LeftCol>
            <LeftStrip />
            <ToolPanel>
              <CommandBox>Command</CommandBox>
              <ToolGrid>
                {TOOLS.map(([menu, icon], i) => (
                  <Tool key={i} menu={menu}>
                    {icon}
                  </Tool>
                ))}
              </ToolGrid>
            </ToolPanel>
            <SnapPanel>
              <SnapList>
                <OptionRow>
                  <Radio $on />
                  Persistent
                </OptionRow>
                <OptionRow>
                  <Radio />
                  One shot
                </OptionRow>
                <Spaced />
                {SNAPS.map(([label, on]) => (
                  <OptionRow key={label}>
                    <Check $on={on}>{on && <CheckMark />}</Check>
                    {label}
                  </OptionRow>
                ))}
              </SnapList>
              <ScrollTrack>
                <ScrollThumb $h={178} />
              </ScrollTrack>
            </SnapPanel>
          </LeftCol>

          <Center>
            <Tabs>
              <TabIcon viewBox="0 0 29 27">
                <path d="M1 1H28V26H1ZM14.5 1V26M1 13.5H28" fill="none" stroke="#9c9d9f" strokeWidth="1.6" />
                <path d="M1 1H12V4H1ZM16 1H28V4H16ZM1 14H12V17H1ZM16 14H28V17H16Z" fill="#9c9d9f" />
              </TabIcon>
              <TabIcon viewBox="0 0 29 27">
                <path d="M1 1H28V26H1Z" fill="none" stroke="#4d9dc0" strokeWidth="1.8" />
                <path d="M1 1H8V4H1Z" fill="#4d9dc0" />
              </TabIcon>
              <Tab $on>Perspective</Tab>
              <Tab>Top</Tab>
              <Tab>Front</Tab>
              <Tab>Right</Tab>
              <LayoutsBtn>Layouts...</LayoutsBtn>
            </Tabs>
            <Viewport>
              <Scene />
              <ViewLabel>Perspective</ViewLabel>
            </Viewport>
          </Center>

          <RightCol>
            <PropsPanel>
              <PanelHead>
                <PanelTitleRow>
                  <PanelTitle>Properties: Viewport</PanelTitle>
                  <GearBtn>
                    <Gear />
                    <Chevron />
                  </GearBtn>
                </PanelTitleRow>
                <PanelIcons $left={324}>
                  <svg width="44" height="34" viewBox="0 0 44 34">
                    <path d="M1 8H13L16 2H28L31 8H43V32H1Z" fill="none" stroke="#2a6fe0" strokeWidth="2" />
                    <circle cx="22" cy="19" r="11" fill="none" stroke="#2a6fe0" strokeWidth="2" />
                    <circle cx="22" cy="19" r="7" fill="none" stroke="#2a6fe0" strokeWidth="2" />
                  </svg>
                  <svg width="44" height="40" viewBox="0 0 44 40">
                    <rect x="1.5" y="1.5" width="41" height="37" fill="#3a3b3e" stroke="#85868a" strokeWidth="3" />
                    <rect x="9" y="9" width="26" height="22" fill="none" stroke="#66676a" strokeWidth="2" />
                  </svg>
                  <svg width="42" height="42" viewBox="0 0 42 42">
                    <g fill="none" stroke="#8e8f93" strokeWidth="2">
                      <circle cx="11" cy="30" r="10" />
                      <circle cx="25" cy="17" r="7.5" />
                      <circle cx="35" cy="7" r="6" />
                    </g>
                  </svg>
                </PanelIcons>
              </PanelHead>
              <PropsBody>
                <PropsScroll>
                  <Section $h={126}>
                    <LabelRow $label={91} $h={35} $top={20}>
                      <RowLabel>Title:</RowLabel>
                      <Field $w={645}>Perspective</Field>
                    </LabelRow>
                    <LabelRow $label={91} $h={30} $top={16}>
                      <RowLabel>Size:</RowLabel>
                      <span>2158 x 1770</span>
                    </LabelRow>
                  </Section>
                  <Section $h={184}>
                    <SectionTitle $top={19} $after={4}>Projection</SectionTitle>
                    <OptionRow $indent={44}>
                      <Radio />
                      Parallel
                    </OptionRow>
                    <OptionRow $indent={44}>
                      <Radio $on />
                      Perspective
                    </OptionRow>
                    <OptionRow $indent={44}>
                      <Radio />
                      Two point perspective
                    </OptionRow>
                  </Section>
                  <Section $h={206}>
                    <SectionTitle $top={18} $after={8}>Wallpaper</SectionTitle>
                    <ChooseRow>
                      Choose...
                      <UpDown />
                    </ChooseRow>
                    <OptionRow $indent={40} $muted $h={40}>
                      <Check $muted />
                      Show wallpaper
                    </OptionRow>
                    <OptionRow $indent={40} $muted $h={40} $top={2}>
                      <Check $muted />
                      Show wallpaper as gray scale
                    </OptionRow>
                  </Section>
                  <Section $h={348}>
                    <SectionTitle $top={19} $after={8}>Camera</SectionTitle>
                    {CAMERA.map(([label, value]) => (
                      <LabelRow key={label} $label={167} $h={54}>
                        <RowLabel>{label}</RowLabel>
                        <Field $w={118}>{value}</Field>
                      </LabelRow>
                    ))}
                  </Section>
                </PropsScroll>
                <ScrollTrack>
                  <ScrollThumb $h={685} />
                </ScrollTrack>
              </PropsBody>
            </PropsPanel>

            <LayersPanel>
              <PanelHead>
                <PanelTitleRow>
                  <PanelTitle>Panels: Layers</PanelTitle>
                  <GearBtn>
                    <Gear />
                    <Chevron />
                  </GearBtn>
                </PanelTitleRow>
                <PanelIcons $left={204}>
                  <svg width="46" height="40" viewBox="0 0 46 40">
                    <g fill="none" stroke="#2a6fe0" strokeWidth="2">
                      <path d="M23 1L45 14L23 27L1 14Z" />
                      <path d="M8 18L1 23L23 39L45 23L38 18" />
                    </g>
                  </svg>
                  <svg width="26" height="38" viewBox="0 0 26 38">
                    <path d="M1.5 1.5H17L24.5 9V36.5H1.5ZM17 1.5V9H24.5" fill="none" stroke="#8e8f93" strokeWidth="2.4" />
                  </svg>
                  <svg width="36" height="40" viewBox="0 0 36 40">
                    <path d="M17 1L35 10V28L20 39L2 30V12ZM2 12L20 20L35 10M20 20V39" fill="none" stroke="#8e8f93" strokeWidth="2" />
                  </svg>
                  <svg width="42" height="40" viewBox="0 0 42 40">
                    <path d="M8 34V6C8 3 10 2 13 2H41M35 2C33 4 33 6 35 7H40M30 38H6C2 38 1 35 1 33C1 31 2 30 6 30H25C29 30 30 32 30 34C30 36 28 36 27 35" fill="none" stroke="#8e8f93" strokeWidth="2" />
                    <path d="M33 7V30" stroke="#8e8f93" strokeWidth="2" />
                  </svg>
                  <svg width="42" height="40" viewBox="0 0 42 40">
                    <rect x="1" y="1" width="40" height="31" rx="3" fill="none" stroke="#8e8f93" strokeWidth="2" />
                    <rect x="6" y="6" width="30" height="21" fill="none" stroke="#8e8f93" strokeWidth="2" />
                    <path d="M21 32V37M11 38H31" stroke="#8e8f93" strokeWidth="2" />
                  </svg>
                  <svg width="40" height="40" viewBox="0 0 40 40">
                    <circle cx="20" cy="20" r="18.5" fill="none" stroke="#8e8f93" strokeWidth="2" />
                    <text x="20" y="30" textAnchor="middle" fontFamily="Inter, sans-serif" fontSize="28" fill="#8e8f93">?</text>
                  </svg>
                  <svg width="44" height="40" viewBox="0 0 44 40">
                    <rect x="1" y="1" width="42" height="38" fill="#39393c" stroke="#8e8f93" strokeWidth="2" />
                    <path d="M8 1V39M15 1V39M22 1V39M29 1V39M36 1V39M1 8H43M1 15H43M1 22H43M1 29H43" stroke="#77787b" strokeWidth="1" />
                    <rect x="22" y="1" width="21" height="20" fill="#39393c" stroke="#8e8f93" strokeWidth="2" />
                  </svg>
                </PanelIcons>
              </PanelHead>
              <ColHead>
                Name
                <ColMarks>
                  <span />
                  <span />
                  <span />
                  <span />
                </ColMarks>
              </ColHead>
              <LayerList>
                {LAYERS.map((l) => (
                  <LayerRow key={l.name}>
                    {l.children ? <Arrow /> : <span />}
                    <span>{l.name}</span>
                    <Radio $on={l.active} />
                    <Bulb dim={l.active} />
                    <Lock dim={l.active} />
                    <span />
                    <Swatch $color={l.color} />
                  </LayerRow>
                ))}
              </LayerList>
              <LayersFoot>
                <FootGroup>
                  <FootCell $w={47} $split>
                    <svg width="24" height="24" viewBox="0 0 24 24">
                      <path d="M12 1V23M1 12H23" stroke="#f4f4f4" strokeWidth="2" />
                    </svg>
                  </FootCell>
                  <FootCell $w={44}>
                    <svg width="22" height="4" viewBox="0 0 22 4">
                      <path d="M0 2H22" stroke="#8a8b8e" strokeWidth="3" />
                    </svg>
                  </FootCell>
                </FootGroup>
                <FootGear>
                  <Gear size={20} color="#37383b" />
                  <Chevron />
                </FootGear>
              </LayersFoot>
            </LayersPanel>
          </RightCol>
        </Workspace>

        <StatusBar>
          <LinesIcon />
          Command: RunPythonScript
          <StatusRight>
            <StatusText $w={105}>Meters</StatusText>
            <PlaneSelect>
              CPlane
              <UpDown />
            </PlaneSelect>
            <StatusText $w={163}>X: -343.276</StatusText>
            <StatusText $w={170}>Y: -428.896</StatusText>
            <StatusText $w={120}>Z: 0.000</StatusText>
          </StatusRight>
        </StatusBar>
      </Win>
    </Page>
  );
};

export default App;
